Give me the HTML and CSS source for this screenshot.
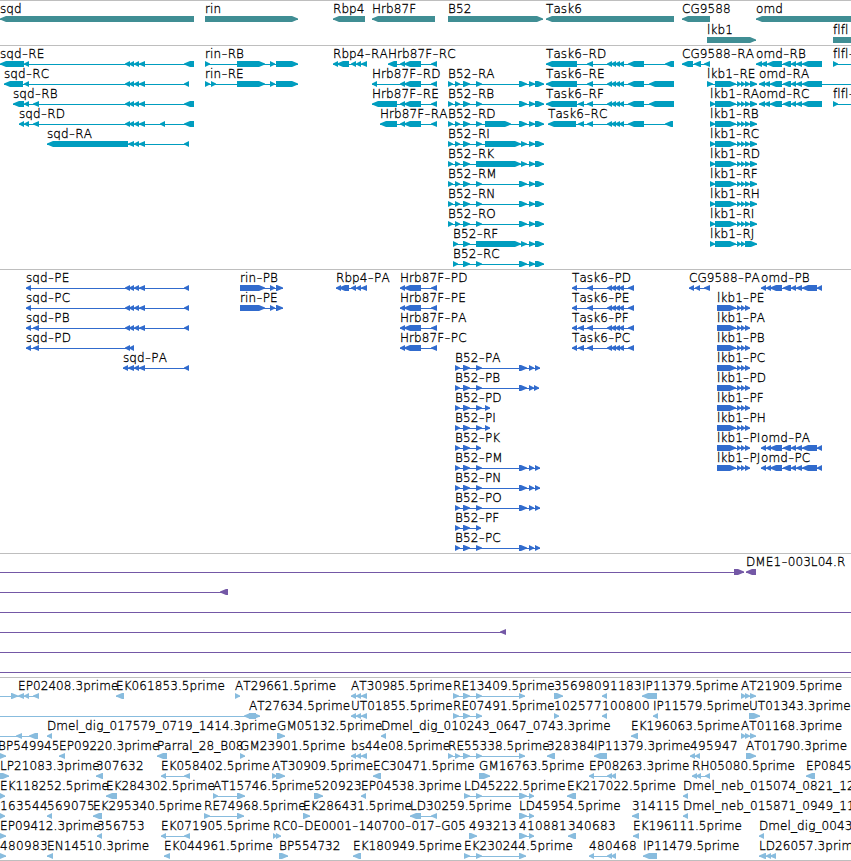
FILE: index.html
```
<!DOCTYPE html>
<html lang="en">
<head>
    <meta charset="UTF-8">
    <title>Genome Browser</title>
    <link rel="stylesheet" href="styles.css">
</head>
<body>
    <div class="browser">
        <section class="track genes" id="genes"></section>
        <section class="track transcripts" id="transcripts"></section>
        <section class="track proteins" id="proteins"></section>
        <section class="track bacs" id="bacs"></section>
        <section class="track ests" id="ests"></section>
    </div>
    <script src="tracks.js"></script>
</body>
</html>
```
FILE: styles.css
```
body {
    margin: 0;
    background: #fff;
    overflow: hidden;
}
.browser {
    width: 851px;
    height: 860px;
    border-bottom: 1px solid #bebebe;
}
.track {
    border-top: 1px solid #bebebe;
    padding-bottom: 3px;
}
.row {
    display: block;
    width: 851px;
    height: 20px;
    overflow: visible;
    fill: currentColor;
}
.row text {
    font-family: "DejaVu Sans", sans-serif;
    font-size: 12px;
    font-weight: 200;
    font-kerning: none;
    letter-spacing: 0.08px;
    fill: #000;
    stroke: #000;
    stroke-width: 0.3px;
}
.row .number {
    letter-spacing: 0.35px;
}
.row .dash {
    font-size: 18px;
    stroke: none;
}
.genes {
    color: #408e94;
    padding-bottom: 2px;
}
.genes .row {
    height: 21px;
}
.transcripts {
    color: #009dbf;
}
.proteins {
    color: #316bcd;
}
.bacs {
    color: #7458a6;
}
.ests {
    color: #88bcde;
    padding-bottom: 0;
}
```
FILE: tracks.js
```
// exon groups shared by several transcripts
const sqd = '125-130 129-134 134-139 139-145';
const rbp = '351-356 356-361 361-367';
const hrb = '400-405 404-421 431-437';
const b52s = '448-453 455-460 463-470';
const b52e = '529-535 535-544';
const b52 = b52s + ' 476-482 519-527 ' + b52e;
const b52p = '455-460 463-470 476-482';
const b52pLong = b52p + ' 519-527 529-534 535-540';
const task = '587-593 607-612 611-616 615-620 619-624';
const lkb = '715-736 737-741 741-745 745-750 750-757';
const lkbP = '717-736 737-741 741-745 745-750';
const omd = '783-791 791-796 796-802';
const omdP = '761-766 766-771 770-782 ' + omd + ' 802-817 817-822';
const at = '741-746 745-750 750-756';

// feature: [label, strand, exons, line start, line end]
const tracks = {
    genes: [
        [['sqd', '<', '0-194'], ['rin', '>', '205-298'], ['Rbp4', '<', '333-365'], ['Hrb87F', '<', '372-435'],
         ['B52', '>', '448-543'], ['Task6', '<', '546-674'], ['CG9588', '<', '682-710'], ['omd', '<', '756-870']],
        [['lkb1', '>', '707-756'], ['flfl', '>', '833-870']]
    ],
    transcripts: [
        [['sqd-RE', '<', '0-24 24-29 ' + sqd + ' 184-194'], ['rin-RB', '>', '205-210 237-265 270-275 276-298'],
         ['Rbp4-RA', '<', '333-338 337-349 ' + rbp], ['Hrb87F-RC', '<', '388-397 ' + hrb],
         ['Task6-RD', '<', '546-577 ' + task + ' 628-644 665-674'], ['CG9588-RA', '<', '682-693 694-701 704-710'],
         ['omd-RB', '<', '756-762 761-767 767-782 ' + omd + ' 802-822'], ['flfl-', '>', '833-838', 833, 870]],
        [['sqd-RC', '<', '4-23 24-29 ' + sqd + ' 184-189'], ['rin-RE', '>', '205-210 211-216 237-265 270-275 276-298'],
         ['Hrb87F-RD', '<', '372-377 ' + hrb], ['B52-RA', '>', b52],
         ['Task6-RE', '<', '546-577 ' + task + ' 628-644 649-674'], ['lkb1-RE', '>', '707-713 ' + lkb],
         ['omd-RA', '<', '759-765 764-770 770-782 ' + omd + ' 802-822', 759, 870]],
        [['sqd-RB', '<', '13-24 24-29 33-39 ' + sqd + ' 184-194'], ['Hrb87F-RE', '<', '372-397 ' + hrb], ['B52-RB', '>', b52],
         ['Task6-RF', '<', '546-577 578-584 ' + task + ' 628-644 649-674'], ['lkb1-RA', '>', '710-715 ' + lkb],
         ['omd-RC', '<', '759-765 764-770 770-782 ' + omd + ' 802-822'], ['flfl-', '>', '833-838', 833, 870]],
        [['sqd-RD', '<', '19-24 24-29 33-39 ' + sqd + ' 160-165 184-194'], ['Hrb87F-RA', '<', '380-397 ' + hrb],
         ['B52-RD', '>', b52s + ' 476-482 485-511 519-527 ' + b52e],
         ['Task6-RC', '<', '548-576 578-584 ' + task + ' 628-644 665-673'], ['lkb1-RB', '>', '710-715 ' + lkb]],
        [['sqd-RA', '<', '47-128 128-134 134-139 139-145 184-189'],
         ['B52-RI', '>', b52s + ' 476-482 485-521 521-527 ' + b52e], ['lkb1-RC', '>', '710-715 ' + lkb]],
        [['B52-RK', '>', b52s + ' 476-521 521-527 ' + b52e], ['lkb1-RD', '>', '710-715 ' + lkb]],
        [['B52-RM', '>', b52], ['lkb1-RF', '>', '710-715 ' + lkb]],
        [['B52-RN', '>', b52], ['lkb1-RH', '>', '710-715 ' + lkb]],
        [['B52-RO', '>', b52], ['lkb1-RI', '>', '710-715 ' + lkb]],
        [['B52-RF', '>', '453-458 463-470 476-521 521-527 ' + b52e], ['lkb1-RJ', '>', '710-715 715-736 737-741 741-745 745-757']],
        [['B52-RC', '>', '453-458 463-470 476-482 519-527 ' + b52e]]
    ],
    proteins: [
        [['sqd-PE', '<', '26-31 ' + sqd + ' 184-189'], ['rin-PB', '>', '240-265 270-275 276-283'],
         ['Rbp4-PA', '<', '336-341 339-349 ' + rbp], ['Hrb87F-PD', '<', hrb],
         ['Task6-PD', '<', '572-577 ' + task + ' 628-634'], ['CG9588-PA', '<', '689-694 695-700 704-710'], ['omd-PB', '<', omdP]],
        [['sqd-PC', '<', '26-31 ' + sqd + ' 184-189'], ['rin-PE', '>', '240-265 270-275 276-283'],
         ['Hrb87F-PE', '<', hrb], ['Task6-PE', '<', '572-577 ' + task + ' 628-634'], ['lkb1-PE', '>', lkbP]],
        [['sqd-PB', '<', '26-31 33-39 ' + sqd + ' 184-189'], ['Hrb87F-PA', '<', hrb],
         ['Task6-PF', '<', '572-577 578-584 ' + task + ' 628-634'], ['lkb1-PA', '>', lkbP]],
        [['sqd-PD', '<', '26-31 33-39 125-130 129-134'], ['Hrb87F-PC', '<', hrb],
         ['Task6-PC', '<', '572-577 578-584 ' + task + ' 628-634'], ['lkb1-PB', '>', lkbP]],
        [['sqd-PA', '<', '123-128 128-134 134-139 139-145 184-189'], ['B52-PA', '>', b52pLong], ['lkb1-PC', '>', lkbP]],
        [['B52-PB', '>', b52p + ' 519-527 529-534 534-539'], ['lkb1-PD', '>', lkbP]],
        [['B52-PD', '>', b52p + ' 485-490'], ['lkb1-PF', '>', lkbP]],
        [['B52-PI', '>', b52p + ' 485-490'], ['lkb1-PH', '>', lkbP]],
        [['B52-PK', '>', '455-460 463-470 476-481'], ['lkb1-PI', '>', lkbP], ['omd-PA', '<', omdP]],
        [['B52-PM', '>', b52pLong], ['lkb1-PJ', '>', lkbP], ['omd-PC', '<', omdP]],
        [['B52-PN', '>', b52pLong]],
        [['B52-PO', '>', b52pLong]],
        [['B52-PF', '>', '455-460 463-470 476-481']],
        [['B52-PC', '>', b52pLong]]
    ],
    bacs: [
        [['', '>', '734-744', 0, 744], ['DME1-003L04.R', '<', '746-756']],
        [['', '<', '220-228', 0, 228]],
        [['', '>', '', 0, 851]],
        [['', '<', '500-506', 0, 506]],
        [['', '>', '', 0, 851]],
        [['', '>', '', 0, 851]]
    ],
    ests: [
        [['', '>', '11-18', 0, 18], ['EP02408.3prime', '<', '18-24 24-29 33-39'], ['EK061853.5prime', '<', '116-124'],
         ['AT29661.5prime', '>', '235-240'], ['AT30985.5prime', '<', rbp], ['RE13409.5prime', '>', '453-459 463-470 476-482 519-525'],
         ['356980', '>', '554-563'], ['91183', '<', '602-607'], ['IP11379.5prime', '<', '642-657'], ['AT21909.5prime', '>', at]],
        [['', '<', '244-256', 0, 256], ['AT27634.5prime', '>', '249-260'], ['UT01855.5prime', '<', rbp],
         ['RE07491.5prime', '>', '453-459 463-470 476-482'], ['102577', '>', '554-559'], ['100800', '<', '602-607'],
         ['IP11579.5prime', '<', '653-658'], ['UT01343.3prime', '>', '749-760']],
        [['', '<', '16-22 29-38', 0, 38], ['Dmel_dig_017579_0719_1414.3prime', '<', '47-52'], ['GM05132.5prime', '>', '277-285'],
         ['Dmel_dig_010243_0647_0743.3prime', '<', '381-386'], ['EK196063.5prime', '<', '631-638'], ['AT01168.3prime', '>', at]],
        [['BP549945', '>', '-2-6'], ['EP09220.3prime', '<', '59-65'], ['Parral_28_B08', '<', '157-167'],
         ['GM23901.5prime', '>', '240-245'], ['bs44e08.5prime', '<', rbp], ['RE55338.5prime', '>', '448-453 455-460 463-470 476-482 519-525'],
         ['328384', '<', '547-555'], ['IP11379.3prime', '<', '594-607'], ['495947', '<', '690-695 695-700'], ['AT01790.3prime', '>', '746-756']],
        [['LP21083.3prime', '>', '0-9'], ['307632', '<', '96-103'], ['EK058402.5prime', '<', '161-166 184-190'],
         ['AT30909.5prime', '>', '272-277 276-285'], ['EC30471.5prime', '<', '373-381'], ['GM16763.5prime', '>', '479-490'],
         ['EP08263.3prime', '<', '589-594 607-612 611-616'], ['RH05080.5prime', '<', '692-697 696-701 705-710'], ['EP0845', '<', '806-815']],
        [['EK118252.5prime', '>', '0-5'], ['EK284302.5prime', '<', '106-117'], ['AT15746.5prime', '>', '213-218 237-245'],
         ['520923', '>', '314-323'], ['EP04538.3prime', '<', '361-366'], ['LD45222.5prime', '>', '464-470 476-482 519-527 529-534'],
         ['EK217022.5prime', '<', '567-576'], ['Dmel_neb_015074_0821_12', '<', '683-688']],
        [['163544', '>', '0-5'], ['569075', '<', '47-52'], ['EK295340.5prime', '<', '93-102'], ['RE74968.5prime', '>', '204-210 237-244'],
         ['EK286431.5prime', '>', '303-310'], ['LD30259.5prime', '<', '410-421 431-437'], ['LD45954.5prime', '>', '519-527 529-534'],
         ['314115', '<', '632-639'], ['Dmel_neb_015871_0949_11', '<', '683-688']],
        [['EP09412.3prime', '>', '0-6'], ['356753', '<', '97-102'], ['EK071905.5prime', '<', '161-166 184-190'],
         ['RC0-DE0001-140700-017-G05', '>', '273-277 276-281'], ['493213', '>', '469-477'], ['410881', '>', '519-527 529-534'],
         ['340683', '<', '568-576'], ['EK196111.5prime', '<', '633-639'], ['Dmel_dig_0043', '<', '759-764']],
        [['480983', '>', '0-6'], ['EN14510.3prime', '<', '47-53'], ['EK044961.5prime', '<', '164-170'], ['BP554732', '>', '279-288'],
         ['EK180949.5prime', '<', '353-361'], ['EK230244.5prime', '>', '464-470 476-482 519-526'],
         ['480468', '<', '589-594 607-612 611-616'], ['IP11479.5prime', '<', '643-657'], ['LD26057.3prime', '<', '759-766 766-771 770-776']]
    ]
};

// arrow shaped exon, 6px high
function exon(a, b, strand) {
    const head = Math.min(b - a, 6);
    if (strand === '<') {
        return `<path d="M${b} 15H${a + head}L${a} 17.5V18.5L${a + head} 21H${b}Z"/>`;
    }
    return `<path d="M${a} 15H${b - head}L${b} 17.5V18.5L${b - head} 21H${a}Z"/>`;
}

// dashes are drawn wider than the font's own hyphen
function labelText(label) {
    return label
        .split('-')
        .map((part, i) => i ? `<tspan dy="-1">${part}</tspan>` : part)
        .join('<tspan class="dash" dy="1">-</tspan>');
}

function feature([label, strand, exons, from, to]) {
    const parts = (exons.match(/-?\d+-\d+/g) || []).map(e => e.match(/^(-?\d+)-(\d+)$/).slice(1).map(Number));
    const start = from ?? parts[0][0];
    const end = to ?? parts[parts.length - 1][1];
    let out = `<rect x="${start}" y="18" width="${end - start}" height="1"/>`;
    out += parts.map(([a, b]) => exon(a, b, strand)).join('');
    if (label) {
        const cls = /^\d+$/.test(label) ? ' class="number"' : '';
        out += `<text x="${start}" y="12"${cls}>${labelText(label)}</text>`;
    }
    return out;
}

for (const id in tracks) {
    document.getElementById(id).innerHTML = tracks[id]
        .map(row => `<svg class="row">${row.map(feature).join('')}</svg>`)
        .join('');
}
```
